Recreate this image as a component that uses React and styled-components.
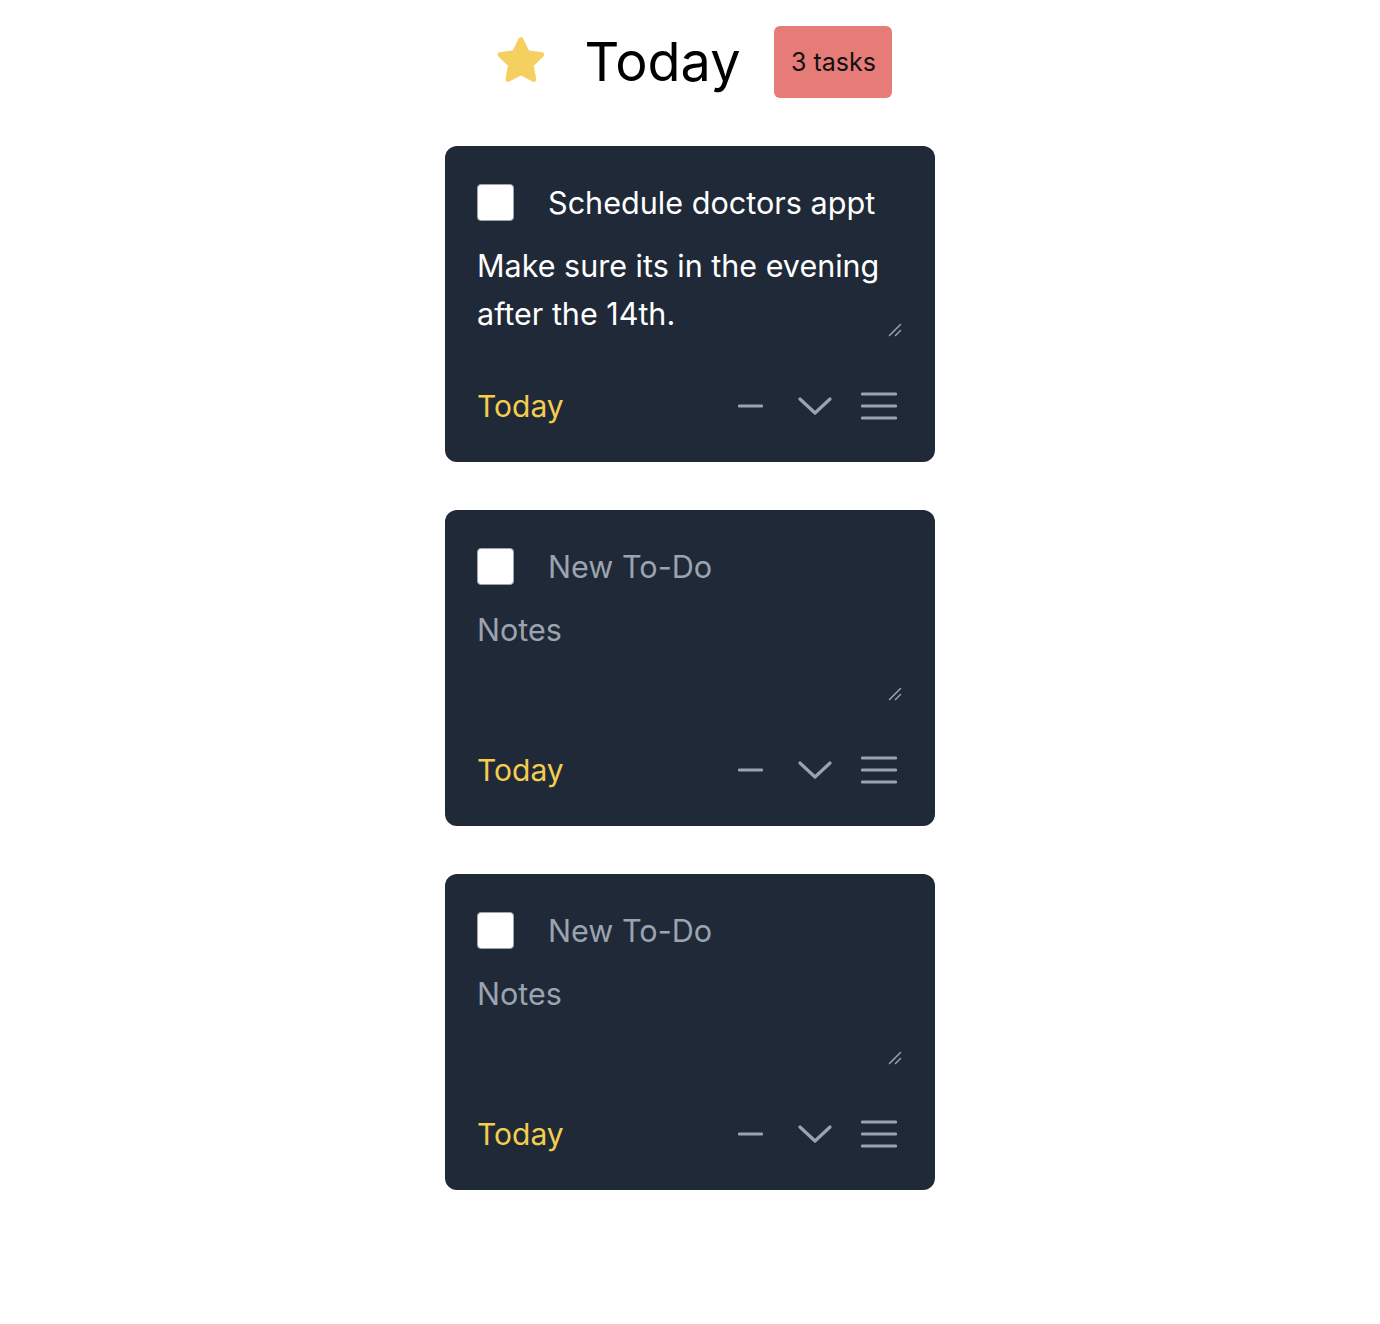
import styled, { createGlobalStyle } from "styled-components";

const GlobalStyle = createGlobalStyle`
  html, body {
    margin: 0;
    padding: 0;
    background: #ffffff;
    font-family: Inter, "Liberation Sans", Arial, sans-serif;
  }
`;

const Page = styled.div`
  width: 1380px;
  min-height: 1324px;
  display: flex;
  flex-direction: column;
  align-items: center;
  box-sizing: border-box;
  padding-top: 26px;
`;

const Header = styled.header`
  display: flex;
  align-items: center;
  height: 72px;
  margin-bottom: 48px;
  margin-left: 5px;
`;

const Star = styled.svg`
  width: 56px;
  height: 56px;
  margin-right: 36px;
  margin-top: -4px;
`;

const Heading = styled.h1`
  margin: 0 34px 0 0;
  font-size: 54px;
  font-weight: 400;
  color: #000;
  line-height: 1;
`;

const Badge = styled.span`
  display: flex;
  align-items: center;
  justify-content: center;
  width: 118px;
  height: 72px;
  border-radius: 6px;
  background: #e77b77;
  color: #111;
  font-size: 25px;
`;

const List = styled.div`
  display: flex;
  flex-direction: column;
  gap: 48px;
`;

const Card = styled.div`
  width: 490px;
  box-sizing: border-box;
  padding: 32px;
  background: #1f2937;
  border-radius: 12px;
  display: flex;
  flex-direction: column;
`;

const TitleRow = styled.div`
  display: flex;
  align-items: center;
  height: 48px;
`;

const Check = styled.span`
  width: 37px;
  height: 37px;
  box-sizing: border-box;
  border: 1.5px solid #9ca3af;
  border-radius: 4px;
  background: #fff;
  flex-shrink: 0;
  margin-right: 34px;
`;

const TitleInput = styled.input`
  flex: 1;
  min-width: 0;
  border: none;
  outline: none;
  background: transparent;
  padding: 0;
  font-family: inherit;
  font-size: 30.6px;
  color: #fff;
  &::placeholder {
    color: #9ca3af;
  }
`;

const NotesWrap = styled.div`
  position: relative;
  margin-top: 16px;
`;

const Notes = styled.textarea`
  display: block;
  width: 100%;
  box-sizing: border-box;
  height: 97px;
  border: none;
  outline: none;
  background: transparent;
  padding: 0;
  font-family: inherit;
  font-size: 30.5px;
  line-height: 48px;
  color: #fff;
  resize: none;
  &::placeholder {
    color: #9ca3af;
  }
`;

const Grip = styled.svg`
  position: absolute;
  right: 1px;
  bottom: 2px;
  width: 14px;
  height: 14px;
  pointer-events: none;
`;

const Footer = styled.div`
  display: flex;
  align-items: center;
  justify-content: space-between;
  height: 48px;
  margin-top: 43px;
`;

const When = styled.span`
  font-size: 30px;
  color: #f4cd4f;
`;

const Actions = styled.div`
  display: flex;
  align-items: center;
  margin-right: 6px;
`;

const IconButton = styled.button`
  border: none;
  background: transparent;
  padding: 0;
  display: flex;
  align-items: center;
  justify-content: center;
  width: ${(p) => p.$w}px;
  height: 36px;
  margin-left: ${(p) => p.$gap}px;
  color: #9ca3af;
  cursor: pointer;
`;

const StarIcon = () => (
  <Star viewBox="0 0 24 24">
    <path
      d="M12 2.2c.4 0 .7.2.9.6l2.5 5.1 5.6.8c.9.1 1.2 1.2.6 1.8l-4.1 4 1 5.6c.2.9-.8 1.6-1.6 1.1L12 18.6l-5 2.6c-.8.4-1.8-.2-1.6-1.1l1-5.6-4.1-4c-.6-.6-.3-1.7.6-1.8l5.6-.8 2.5-5.1c.2-.4.6-.6 1-.6z"
      fill="#f5d061"
    />
  </Star>
);

const todos = [
  { title: "Schedule doctors appt", notes: "Make sure its in the evening after the 14th." },
  { title: "", notes: "" },
  { title: "", notes: "" },
];

const TodoCard = ({ todo }) => (
  <Card>
    <TitleRow>
      <Check />
      <TitleInput defaultValue={todo.title} placeholder="New To-Do" />
    </TitleRow>
    <NotesWrap>
      <Notes defaultValue={todo.notes} placeholder="Notes" />
      <Grip viewBox="0 0 14 14">
        <g stroke="#9ca3af" strokeWidth="1.5" strokeLinecap="round">
          <line x1="1.5" y1="12.5" x2="12.5" y2="1.5" />
          <line x1="7.5" y1="12.5" x2="12.5" y2="7.5" />
        </g>
      </Grip>
    </NotesWrap>
    <Footer>
      <When>Today</When>
      <Actions>
        <IconButton $w={25} $gap={0}>
          <svg width="25" height="4" viewBox="0 0 25 4">
            <line x1="1.5" y1="2" x2="23.5" y2="2" stroke="currentColor" strokeWidth="3.2" strokeLinecap="round" />
          </svg>
        </IconButton>
        <IconButton $w={34} $gap={35}>
          <svg width="34" height="18" viewBox="0 0 34 18">
            <polyline points="2,2 17,16 32,2" fill="none" stroke="currentColor" strokeWidth="3.2" strokeLinecap="round" strokeLinejoin="round" />
          </svg>
        </IconButton>
        <IconButton $w={36} $gap={29}>
          <svg width="36" height="30" viewBox="0 0 36 30">
            <g stroke="currentColor" strokeWidth="3.2" strokeLinecap="round">
              <line x1="1.5" y1="3" x2="34.5" y2="3" />
              <line x1="1.5" y1="15" x2="34.5" y2="15" />
              <line x1="1.5" y1="27" x2="34.5" y2="27" />
            </g>
          </svg>
        </IconButton>
      </Actions>
    </Footer>
  </Card>
);

export default function App() {
  return (
    <>
      <GlobalStyle />
      <Page>
        <Header>
          <StarIcon />
          <Heading>Today</Heading>
          <Badge>3 tasks</Badge>
        </Header>
        <List>
          {todos.map((t, i) => (
            <TodoCard key={i} todo={t} />
          ))}
        </List>
      </Page>
    </>
  );
}
